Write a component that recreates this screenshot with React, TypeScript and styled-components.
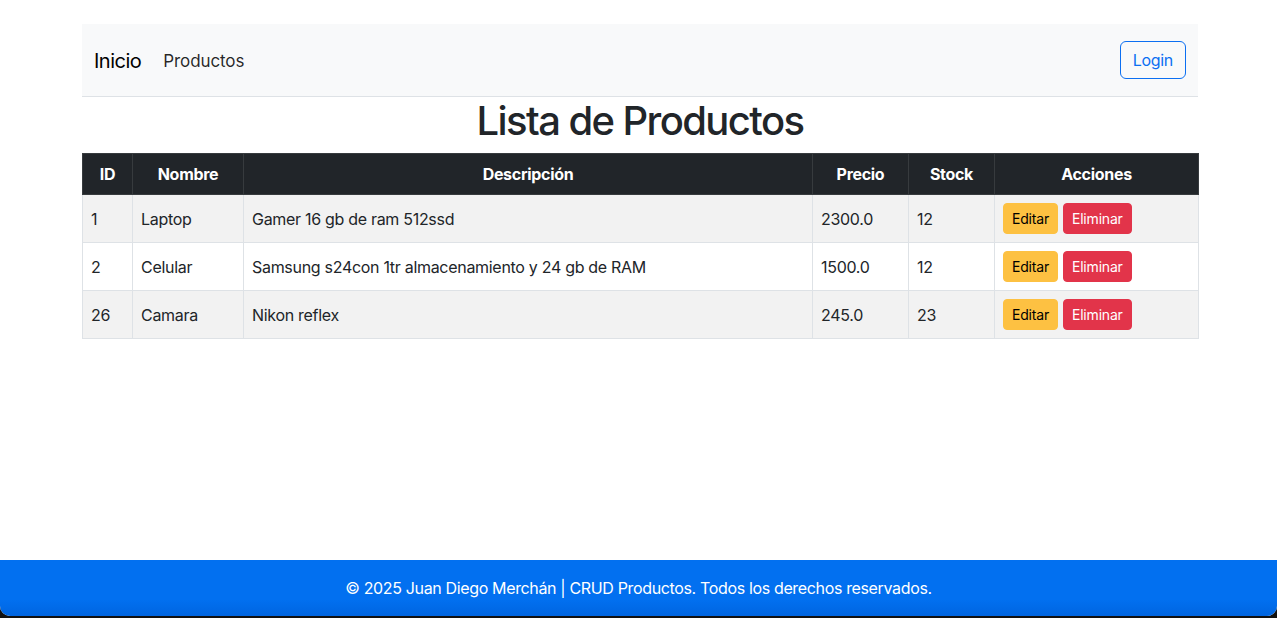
import styled, { createGlobalStyle } from "styled-components";

const GlobalStyle = createGlobalStyle`
  html, body {
    margin: 0;
    padding: 0;
    background: #111;
  }
  body {
    font-family: Inter, "Noto Sans", "Liberation Sans", sans-serif;
    font-size: 16px;
    line-height: 1.5;
    letter-spacing: -0.3px;
    color: #212529;
  }
  * {
    box-sizing: border-box;
  }
`;

interface Producto {
  id: number;
  nombre: string;
  descripcion: string;
  precio: string;
  stock: number;
}

const productos: Producto[] = [
  { id: 1, nombre: "Laptop", descripcion: "Gamer 16 gb de ram 512ssd", precio: "2300.0", stock: 12 },
  { id: 2, nombre: "Celular", descripcion: "Samsung s24con 1tr almacenamiento y 24 gb de RAM", precio: "1500.0", stock: 12 },
  { id: 26, nombre: "Camara", descripcion: "Nikon reflex", precio: "245.0", stock: 23 },
];

const columnas = [
  { label: "ID", width: 50 },
  { label: "Nombre", width: 111 },
  { label: "Descripción", width: 569 },
  { label: "Precio", width: 96 },
  { label: "Stock", width: 86 },
  { label: "Acciones", width: 204 },
];

const App = () => {
  return (
    <>
      <GlobalStyle />
      <Window>
        <Container>
          <Navbar>
            <NavLeft>
              <Brand>Inicio</Brand>
              <NavLink>Productos</NavLink>
            </NavLeft>
            <LoginButton>Login</LoginButton>
          </Navbar>

          <Title>Lista de Productos</Title>

          <Table>
            <colgroup>
              {columnas.map((c) => (
                <col key={c.label} style={{ width: c.width }} />
              ))}
            </colgroup>
            <thead>
              <tr>
                {columnas.map((c) => (
                  <Th key={c.label}>{c.label}</Th>
                ))}
              </tr>
            </thead>
            <tbody>
              {productos.map((p, i) => (
                <Row key={p.id} $striped={i % 2 === 0}>
                  <Td>{p.id}</Td>
                  <Td>{p.nombre}</Td>
                  <Td>{p.descripcion}</Td>
                  <Td>{p.precio}</Td>
                  <Td>{p.stock}</Td>
                  <Td>
                    <Actions>
                      <SmallButton $variant="warning">Editar</SmallButton>
                      <SmallButton $variant="danger">Eliminar</SmallButton>
                    </Actions>
                  </Td>
                </Row>
              ))}
            </tbody>
          </Table>
        </Container>

        <Footer>© 2025 Juan Diego Merchán | CRUD Productos. Todos los derechos reservados.</Footer>
      </Window>
    </>
  );
};

export default App;

const Window = styled.div`
  min-height: 616px;
  display: flex;
  flex-direction: column;
  background: #fff;
  border-radius: 0 0 10px 10px;
  overflow: hidden;
`;

const Container = styled.main`
  width: 1116px;
  margin: 24px 0 0 calc(50% - 556.5px);
`;

const Navbar = styled.nav`
  height: 73px;
  display: flex;
  align-items: center;
  justify-content: space-between;
  padding: 0 12px;
  background-color: #f8f9fa;
  border-bottom: 1px solid #dee2e6;
`;

const NavLeft = styled.div`
  display: flex;
  align-items: center;
  padding-top: 1px;
`;

const Brand = styled.a`
  font-size: 20px;
  letter-spacing: -0.5px;
  color: #000;
  margin-right: 16px;
  cursor: pointer;
`;

const NavLink = styled.a`
  font-size: 17px;
  letter-spacing: -0.1px;
  color: rgba(0, 0, 0, 0.85);
  padding: 9px 8px 7px 6px;
  cursor: pointer;
`;

const LoginButton = styled.button`
  font-family: inherit;
  font-size: 16px;
  letter-spacing: -0.3px;
  line-height: 1.5;
  padding: 6px 12px;
  color: #0b6ff2;
  background: transparent;
  border: 1px solid #0b6ff2;
  border-radius: 6px;
  cursor: pointer;
`;

const Title = styled.h1`
  margin: 0 0 8px;
  font-size: 40px;
  font-weight: 500;
  letter-spacing: -1.6px;
  line-height: 1.2;
  text-align: center;
  color: #212529;
`;

const Table = styled.table`
  width: 100%;
  border-collapse: collapse;
  table-layout: fixed;
`;

const Th = styled.th`
  background-color: #212529;
  color: #fff;
  font-weight: 700;
  text-align: center;
  padding: 8px;
  border: 1px solid #373b3e;
`;

const Row = styled.tr<{ $striped: boolean }>`
  background-color: ${({ $striped }) => ($striped ? "#f2f2f2" : "#fff")};
`;

const Td = styled.td`
  padding: 8px;
  border: 1px solid #dee2e6;
  vertical-align: middle;
  color: #212529;
`;

const Actions = styled.div`
  display: flex;
  gap: 5px;
`;

const SmallButton = styled.button<{ $variant: "warning" | "danger" }>`
  font-family: inherit;
  font-size: 14px;
  letter-spacing: -0.2px;
  line-height: 1.5;
  height: 31px;
  padding: 4px 8px;
  border-radius: 4px;
  border: 1px solid ${({ $variant }) => ($variant === "warning" ? "#fdc142" : "#e2344a")};
  background-color: ${({ $variant }) => ($variant === "warning" ? "#fdc142" : "#e2344a")};
  color: ${({ $variant }) => ($variant === "warning" ? "#000" : "#fff")};
  cursor: pointer;
`;

const Footer = styled.footer`
  margin-top: auto;
  padding: 16px;
  text-align: center;
  color: #fff;
  letter-spacing: -0.35px;
  background: linear-gradient(180deg, #0270f0 0%, #0270f0 70%, #0065e0 100%);
`;
